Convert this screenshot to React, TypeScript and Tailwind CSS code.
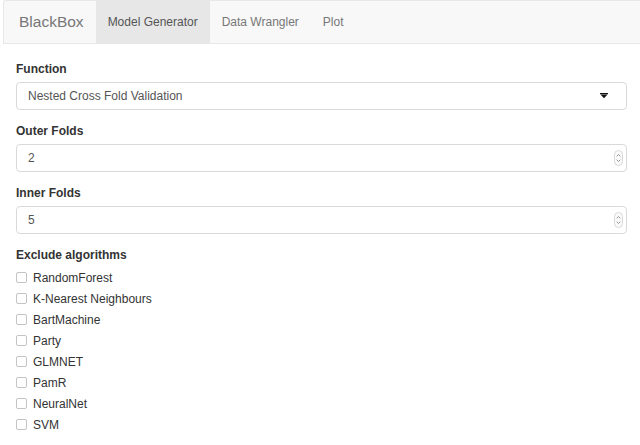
import React from "react";

const algos = [
  "RandomForest",
  "K-Nearest Neighbours",
  "BartMachine",
  "Party",
  "GLMNET",
  "PamR",
  "NeuralNet",
  "SVM",
];

function Spinner() {
  return (
    <svg width="9" height="16" viewBox="0 0 9 16" className="shrink-0">
      <rect x="0.5" y="0.5" width="8" height="15" rx="4" fill="#fafafa" stroke="#d8d8d8" />
      <path d="M2.7 6.3 L4.5 4.5 L6.3 6.3" fill="none" stroke="#888" strokeWidth="0.9" />
      <path d="M2.7 9.7 L4.5 11.5 L6.3 9.7" fill="none" stroke="#888" strokeWidth="0.9" />
    </svg>
  );
}

function NumberField({ value }: { value: string }) {
  return (
    <div className="flex h-[28px] w-[611px] items-center justify-between rounded-[4px] border border-[#d9d9d9] bg-white pl-[11px] pr-[3px] text-[12px] text-[#555]">
      <span>{value}</span>
      <Spinner />
    </div>
  );
}

function Label({ children }: { children: React.ReactNode }) {
  return <div className="h-[16px] text-[12px] font-bold leading-[16px] text-[#333]">{children}</div>;
}

export default function App() {
  return (
    <div
      className="h-[445px] w-[640px] overflow-hidden bg-white"
      style={{ fontFamily: '"Liberation Sans", Arial, sans-serif' }}
    >
      <nav className="ml-[3px] flex h-[44px] items-stretch rounded-tl-[3px] border-b border-l border-t border-[#e7e7e7] bg-[#f8f8f8]">
        <div className="flex items-center pl-[15px] pr-[12px] text-[15.5px] text-[#777]">BlackBox</div>
        <div className="flex items-center bg-[#e7e7e7] px-[12px] text-[12px] text-[#555]">Model Generator</div>
        <div className="flex items-center px-[12px] text-[12px] text-[#777]">Data Wrangler</div>
        <div className="flex items-center px-[12px] text-[12px] text-[#777]">Plot</div>
      </nav>

      <div className="flex flex-col px-[16px] pt-[17px]">
        <Label>Function</Label>
        <div className="mt-[5px] flex h-[28px] w-[611px] items-center justify-between rounded-[4px] border border-[#d9d9d9] bg-white pl-[11px] pr-[18px] text-[12px] text-[#555]">
          <span>Nested Cross Fold Validation</span>
          <svg width="8" height="6" viewBox="0 0 8 6">
            <rect x="0" y="0" width="8" height="1.2" fill="#111" />
            <path d="M0.5 1.5 L7.5 1.5 L4 5.3 Z" fill="#111" />
          </svg>
        </div>

        <div className="mt-[13px]">
          <Label>Outer Folds</Label>
        </div>
        <div className="mt-[5px]">
          <NumberField value="2" />
        </div>

        <div className="mt-[13px]">
          <Label>Inner Folds</Label>
        </div>
        <div className="mt-[5px]">
          <NumberField value="5" />
        </div>

        <div className="mt-[13px]">
          <Label>Exclude algorithms</Label>
        </div>
        <div className="mt-[4px] flex flex-col">
          {algos.map((a) => (
            <div key={a} className="flex h-[21px] items-center gap-[6px] text-[12px] text-[#333]">
              <span className="box-border h-[11px] w-[11px] rounded-[2px] border border-[#c4c4c4] bg-white" />
              <span>{a}</span>
            </div>
          ))}
        </div>
      </div>
    </div>
  );
}
